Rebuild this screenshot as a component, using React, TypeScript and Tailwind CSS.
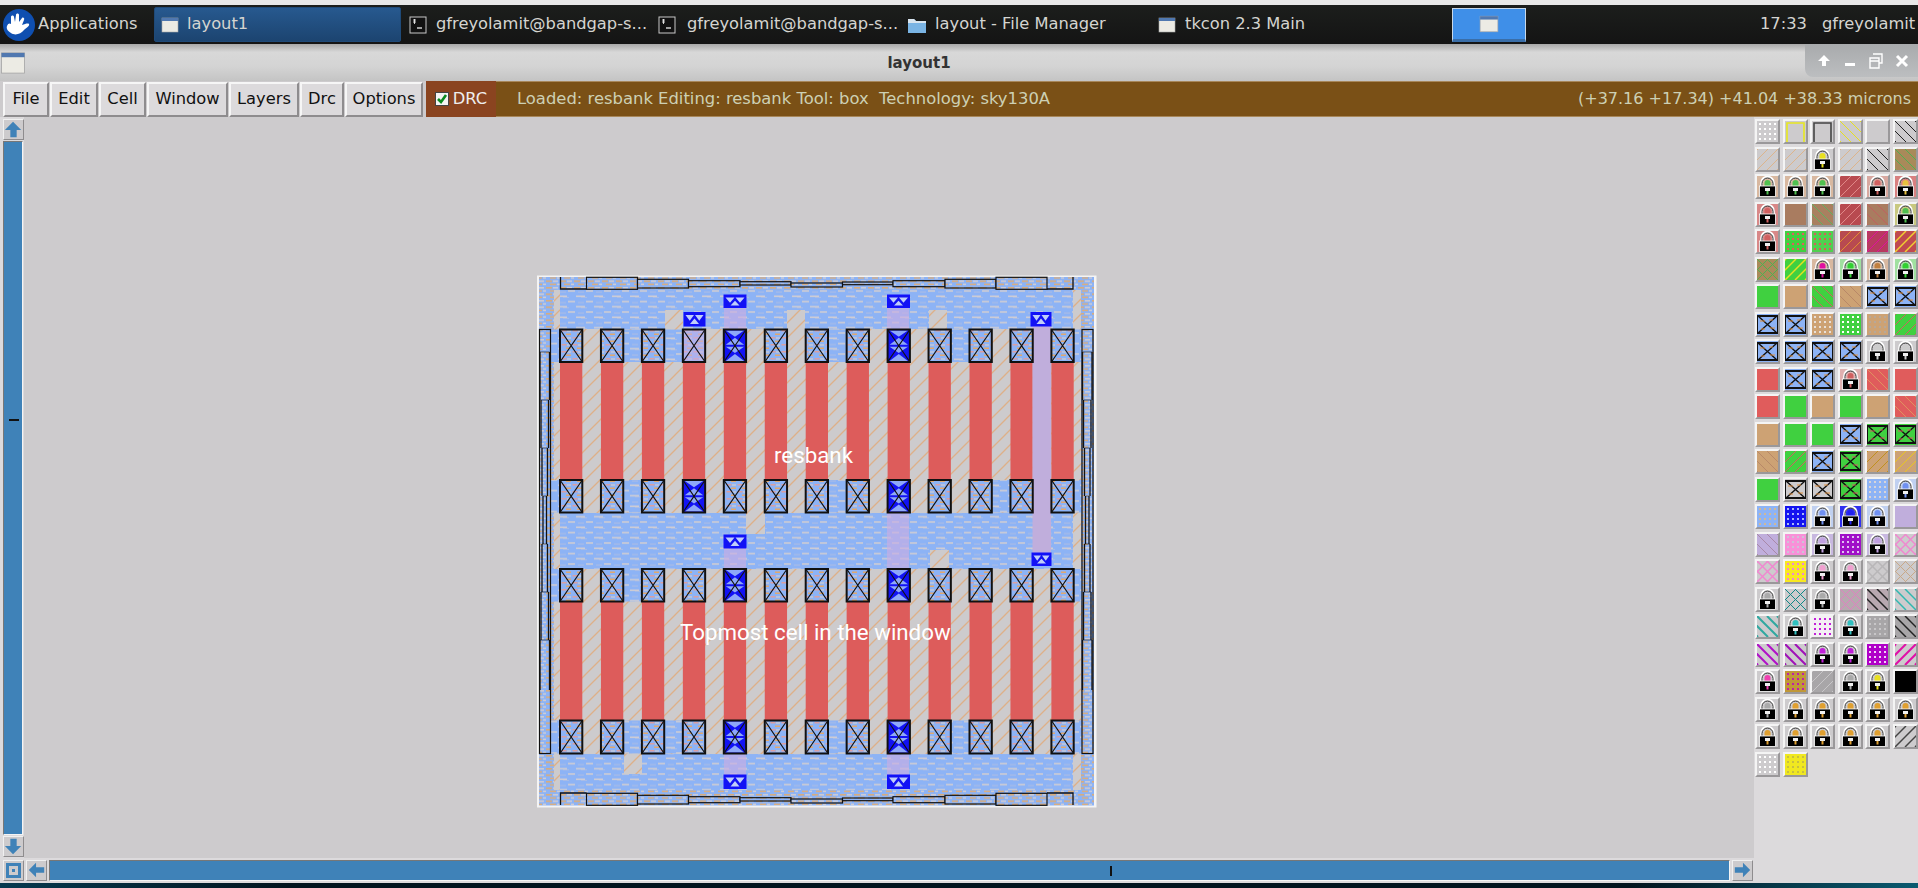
import { useId } from 'react';

type Swatch = {
  bg: string;
  line?: string;
  dir?: 'f' | 'b' | 'x';
  w?: number;
  dots?: string;
  lock?: string;
  box?: string;
  outline?: string;
};

const GREEN = '#40d040';
const TAN = '#cda274';
const RED = '#e05c5c';
const GREY = '#cdcbcd';
const METAL = '#8db3f5';

const plain = (bg: string): Swatch => ({ bg });
const hatch = (bg: string, line: string, dir: 'f' | 'b' | 'x' = 'f', w = 1): Swatch => ({ bg, line, dir, w });
const lock = (color: string, bg = GREY): Swatch => ({ bg, lock: color });
const cross = (box: string, bg = METAL): Swatch => ({ bg, box });
const dots = (bg: string, dotColor: string): Swatch => ({ bg, dots: dotColor });

const swatches: Swatch[] = [
  dots(GREY, '#ffffff'), { bg: GREY, outline: '#e8e820' }, { bg: GREY, outline: '#444444' }, hatch(GREY, '#e8e020', 'b'), plain(GREY), hatch(GREY, '#222222', 'b'),
  hatch(GREY, '#dcb48c'), hatch(GREY, '#dcb48c'), lock('#e8e020'), hatch(GREY, '#dcb48c'), hatch(GREY, '#222222', 'b'), hatch('#a98a5a', '#50b050', 'b'),
  lock('#50c050', '#d8b8a0'), lock('#50c050', '#d8b8a0'), lock('#50c050', '#d8b8a0'), hatch('#b84a50', '#e08888'), lock('#d06060', '#d8a8a0'), lock('#e8c040', '#d88080'),
  lock('#d06060', '#d88888'), plain('#a97c60'), hatch('#a98060', '#60b060', 'b'), hatch('#b84a50', '#e08888'), hatch('#a97c60', '#c06060', 'b'), lock('#50c050', '#c8c880'),
  lock('#d06060', '#d88888'), dots(GREEN, '#e05c5c'), dots('#50d050', '#d85c5c'), hatch('#b84a50', '#e09030'), hatch('#b83a60', '#e010a0'), hatch('#c04a50', '#f0d030', 'f', 1.5),
  hatch('#a98a5a', '#50b050', 'x'), hatch(GREEN, '#e8e020', 'f', 1.5), lock('#e010a0', '#d8b8a0'), lock('#30d030', '#a0e0a0'), lock('#c08040', '#d8b8a0'), lock('#30d030', '#a0e0a0'),
  plain(GREEN), plain(TAN), hatch(GREEN, '#d06060', 'b'), hatch(TAN, '#b88868', 'b'), cross('#111111'), cross('#111111'),
  cross('#111111'), cross('#111111'), dots(TAN, '#e8e0d8'), dots(GREEN, '#ffffff'), dots(TAN, '#b8a898'), hatch(GREEN, '#d06060'),
  cross('#111111'), cross('#111111'), cross('#111111'), cross('#111111'), lock('#cccccc'), lock('#cccccc'),
  plain(RED), cross('#111111'), cross('#111111'), lock('#d06060', '#e0b0b0'), hatch(RED, '#e09060', 'b'), plain(RED),
  plain(RED), plain(GREEN), plain(TAN), plain(GREEN), plain(TAN), hatch(RED, '#e09060', 'b'),
  plain(TAN), plain(GREEN), plain(GREEN), cross('#111111'), cross('#111111', GREEN), cross('#111111', GREEN),
  hatch(TAN, '#b88868', 'b'), hatch(GREEN, '#d06060'), cross('#111111'), cross('#111111', GREEN), hatch(TAN, '#c09020'), hatch(TAN, '#e8c820'),
  plain(GREEN), cross('#111111', GREY), cross('#111111', GREY), cross('#111111', GREEN), { bg: METAL, dots: '#d8d4d8' }, lock('#7090f0', '#c0d0f0'),
  { bg: METAL, dots: '#d0b898' }, { bg: '#1414f0', dots: '#a8b8f8' }, lock('#7090f0', '#c0d0f0'), lock('#2020f0', '#3030f0'), lock('#7090f0', '#c0d0f0'), plain('#c0aedc'),
  hatch('#c0aedc', '#a888a8', 'b'), dots('#f890d8', '#d0c0d8'), lock('#c0a0e0', '#c8b8e0'), { bg: '#a010c8', dots: '#e0c0f0' }, lock('#c0a0e0', '#c8b8e0'), hatch(GREY, '#f088d0', 'x', 1.5),
  hatch(GREY, '#f088d0', 'x', 1.5), { bg: '#f8e820', dots: '#f088d0' }, lock('#f0a0d0'), lock('#f0a0d0'), hatch(GREY, '#b8b6b8', 'x', 1.5), hatch(GREY, '#c8a888', 'x', 1),
  lock('#aaaaaa'), hatch(GREY, '#108888', 'x', 1), lock('#aaaaaa'), hatch('#b8a8b0', '#e080c0', 'x', 1), hatch('#b8a8b0', '#222222', 'b', 1.5), hatch(GREY, '#30b8b0', 'b', 1.5),
  hatch(GREY, '#30a8a0', 'b', 2), lock('#30c0c0'), { bg: '#f4f0f4', dots: '#c020d8' }, lock('#30c0c0'), dots('#a8a6a8', '#c8c6c8'), hatch('#a8a6a8', '#222222', 'b', 1.5),
  hatch(GREY, '#b010c8', 'b', 2), hatch(GREY, '#a010b8', 'b', 2), lock('#c020d8'), lock('#c020d8'), { bg: '#b000c8', dots: '#f0d0f4' }, hatch(GREY, '#e010a8', 'f', 2),
  lock('#f040b0'), { bg: '#c09838', dots: '#c020a8' }, hatch('#a8a6a8', '#c8c6c8', 'f', 1), lock('#aaaaaa'), lock('#e8e020'), plain('#000000'),
  lock('#aaaaaa'), lock('#e0a030'), lock('#e0a030'), lock('#e0a030'), lock('#e0a030'), lock('#e0a030'),
  lock('#e0a030'), lock('#e0a030'), lock('#e0a030'), lock('#e0a030'), lock('#e0a030'), hatch(GREY, '#444444', 'f', 1.5),
  dots(GREY, '#ffffff'), dots('#f0e820', '#c8c040'),
];

function HatchLines({ line, dir, w }: { line: string; dir: 'f' | 'b' | 'x'; w: number }) {
  const offsets = [-20, -10, 0, 10, 20];
  return (
    <g stroke={line} strokeWidth={w}>
      {dir !== 'b' && offsets.map((o) => <line key={`f${o}`} x1={o} y1={21} x2={o + 21} y2={0} />)}
      {dir !== 'f' && offsets.map((o) => <line key={`b${o}`} x1={o} y1={0} x2={o + 21} y2={21} />)}
    </g>
  );
}

function LayerSwatch({ s }: { s: Swatch }) {
  const dotCells = [3, 8, 13, 18];
  return (
    <div className="h-[25px] w-[25px] border-2 border-t-[#f4f4f4] border-l-[#f4f4f4] border-b-[#9a989a] border-r-[#9a989a]">
      <svg viewBox="0 0 21 21" className="block h-full w-full">
        <rect width="21" height="21" fill={s.bg} />
        {s.line && <HatchLines line={s.line} dir={s.dir ?? 'f'} w={s.w ?? 1} />}
        {s.dots && dotCells.flatMap((y) => dotCells.map((x) => <rect key={`${x}-${y}`} x={x - 1} y={y - 1} width="2" height="2" fill={s.dots} />))}
        {s.outline && <path d="M2 21V2h17v19" fill="none" stroke={s.outline} strokeWidth="1.6" />}
        {s.box && (
          <g>
            <rect x="0" y="2" width="21" height="17" fill="none" stroke={s.box} strokeWidth="2" />
            <path d="M1 2L20 19M20 2L1 19" stroke={s.box} strokeWidth="1.4" />
            <path d="M3 7h5M13 14h5M12 6h4M4 15h4" stroke={s.bg === GREEN ? '#d06060' : '#e09040'} strokeWidth="1" />
          </g>
        )}
        {s.lock && (
          <g>
            <path d="M4.5 12V7a6 6 0 0 1 12 0v5" fill={s.bg} stroke="#ffffff" strokeWidth="2.6" />
            <path d="M5 11V7.5a5.5 5.5 0 0 1 11 0V11" fill="none" stroke="#111111" strokeWidth="0.9" />
            <path d="M7.5 7a3 3 0 0 1 6 0v3h-6z" fill={s.lock} />
            <rect x="2.5" y="10" width="16" height="10.5" fill="#000000" stroke="#ffffff" strokeWidth="0.8" />
            <rect x="8" y="12" width="5" height="3" fill="#f0f0f0" />
            <rect x="9.5" y="15" width="2" height="3.5" fill={s.lock} />
          </g>
        )}
      </svg>
    </div>
  );
}

function WindowIcon({ className }: { className: string }) {
  return (
    <svg viewBox="0 0 18 18" className={className}>
      <rect x="1" y="2" width="16" height="14" fill="#ecebe4" stroke="#a8a8a8" strokeWidth="0.6" />
      <rect x="1" y="2" width="16" height="3" fill="#5078b0" />
    </svg>
  );
}

function TerminalIcon() {
  return (
    <svg viewBox="0 0 18 18" className="h-[18px] w-[18px] shrink-0">
      <rect x="1" y="1" width="16" height="16" fill="#111111" stroke="#c8c8c8" strokeWidth="1" />
      <path d="M4 4h3M4 6h3M5.5 3v5" stroke="#ffffff" strokeWidth="0.8" />
      <path d="M8 12h5" stroke="#ffffff" strokeWidth="1.2" />
    </svg>
  );
}

function XfceLogo() {
  return (
    <svg viewBox="0 0 32 32" className="h-[32px] w-[32px] shrink-0">
      <circle cx="16" cy="16" r="16" fill="#0f4fb0" />
      <path d="M4 17c1-3 3-3 4-2l0-7c0-2 3-2 3 0l1 5 1-7c0-2 3-2 3 0l0 7 3-4c1-1 3 0 2 2l-2 5c3-1 6-2 7-1 1 2-3 4-5 6-3 4-9 6-13 3-3-2-5-4-4-7z" fill="#ffffff" />
    </svg>
  );
}

function ArrowButton({ dir, className }: { dir: 'up' | 'down' | 'left' | 'right'; className?: string }) {
  const paths = {
    up: 'M10 2L19 11H14V19H7V11H1Z',
    down: 'M10 19L19 10H14V2H7V10H1Z',
    left: 'M2 10L10 2V7H19V13H10V18Z',
    right: 'M19 10L11 2V7H2V13H11V18Z',
  };
  return (
    <div className={`h-[21px] w-[21px] shrink-0 border border-t-[#f0f0f0] border-l-[#f0f0f0] border-b-[#8e8c8e] border-r-[#8e8c8e] bg-[#cdcbcd] ${className ?? ''}`}>
      <svg viewBox="0 0 21 21" className="block h-full w-full">
        <path d={paths[dir]} fill="#3f82b8" />
      </svg>
    </div>
  );
}

function TaskButton({ icon, label, className }: { icon: React.ReactNode; label: string; className: string }) {
  return (
    <div className={`flex h-[35px] shrink-0 items-center overflow-hidden whitespace-nowrap ${className}`}>
      {icon}
      <span>{label}</span>
    </div>
  );
}

function Taskbar() {
  return (
    <div className="flex h-[39px] items-center bg-[linear-gradient(#1c1e1c,#141414)] text-[16.3px] text-[#d4d4d0]">
      <div className="ml-[3px] mr-[17px] flex w-[134px] shrink-0 items-center gap-[3px]">
        <XfceLogo />
        <span>Applications</span>
      </div>
      <TaskButton
        icon={<WindowIcon className="h-[18px] w-[18px] shrink-0" />}
        label="layout1"
        className="w-[247px] gap-[8px] rounded-[2px] border border-[#1f4a78] bg-[linear-gradient(#27598f,#1c4470)] pl-[6px]"
      />
      <TaskButton icon={<TerminalIcon />} label="gfreyolamit@bandgap-s..." className="ml-[8px] w-[249px] gap-[9px]" />
      <TaskButton icon={<TerminalIcon />} label="gfreyolamit@bandgap-s..." className="w-[249px] gap-[11px]" />
      <TaskButton
        icon={
          <svg viewBox="0 0 20 18" className="h-[18px] w-[20px] shrink-0">
            <path d="M1 3h6l2 2h10v12H1z" fill="#7ab4e4" />
            <path d="M1 3h6l2 2h10v2H1z" fill="#d8e4ee" />
          </svg>
        }
        label="layout - File Manager"
        className="w-[251px] gap-[8px]"
      />
      <TaskButton icon={<WindowIcon className="h-[18px] w-[18px] shrink-0" />} label="tkcon 2.3 Main" className="w-[294px] gap-[9px]" />
      <div className="flex h-[34px] w-[74px] shrink-0 items-center justify-center border border-[#c8d8e8] border-b-[3px] border-b-[#3a6ea8] bg-[#3f8fe8]">
        <WindowIcon className="h-[20px] w-[20px]" />
      </div>
      <div className="ml-[234px] whitespace-nowrap">17:33</div>
      <div className="ml-[15px] whitespace-nowrap">gfreyolamit</div>
    </div>
  );
}

function TitleBar() {
  return (
    <div className="relative flex h-[37px] items-center justify-center bg-[linear-gradient(#a8a8a8,#d8d8d8_22%,#d4d4d4_60%,#c4c4c4)] pr-[80px] pt-[1px] text-[15px] font-bold text-[#333333]">
      <WindowIcon className="absolute left-[0px] top-[6px] h-[26px] w-[26px]" />
      <span>layout1</span>
      <div className="absolute right-0 top-0 flex h-[33px] w-[113px] items-center gap-[12px] rounded-bl-[8px] bg-[linear-gradient(#a8aaac,#bcbec0)] pl-[12px]">
        <svg viewBox="0 0 14 14" className="h-[14px] w-[14px]"><path d="M7 1l6 6H9v5H5V7H1z" fill="#ffffff" /></svg>
        <svg viewBox="0 0 14 14" className="h-[14px] w-[14px]"><rect x="2" y="9" width="10" height="3" fill="#ffffff" /></svg>
        <svg viewBox="0 0 14 16" className="h-[16px] w-[14px]"><path d="M4 1h9v9h-3M1 5h9v10H1zM1 8h9" fill="none" stroke="#ffffff" strokeWidth="1.4" /></svg>
        <svg viewBox="0 0 14 14" className="h-[14px] w-[14px]"><path d="M2 2l10 10M12 2L2 12" stroke="#ffffff" strokeWidth="3" /></svg>
      </div>
    </div>
  );
}

const menus = [
  { label: 'File', w: 'w-[46px]' },
  { label: 'Edit', w: 'w-[48px]' },
  { label: 'Cell', w: 'w-[47px]' },
  { label: 'Window', w: 'w-[81px]' },
  { label: 'Layers', w: 'w-[70px]' },
  { label: 'Drc', w: 'w-[44px]' },
  { label: 'Options', w: 'w-[78px]' },
];

function Toolbar() {
  return (
    <div className="flex h-[36px] bg-[#7a5016] text-[16.3px]">
      <div className="flex w-[426px] shrink-0 items-stretch gap-[1px] bg-[#cdcbcd] pl-[3px] pt-[1px]">
        {menus.map((m) => (
          <div key={m.label} className={`flex ${m.w} items-center justify-center border-2 border-t-[#f6f6f6] border-l-[#f6f6f6] border-b-[#8e8c8e] border-r-[#8e8c8e] bg-[#dcdadc] text-[#111111]`}>
            {m.label}
          </div>
        ))}
      </div>
      <div className="flex w-[70px] shrink-0 items-center justify-center gap-[4px] bg-[#8a4420] text-[#eeeeee]">
        <span className="flex h-[14px] w-[14px] items-center justify-center border border-[#444444] bg-[#f4f4f4]">
          <svg viewBox="0 0 12 12" className="h-[12px] w-[12px]"><path d="M2 6l3 3 5-7" fill="none" stroke="#0a8a20" strokeWidth="2.6" /></svg>
        </span>
        DRC
      </div>
      <div className="flex flex-1 items-center justify-between whitespace-pre border-y border-y-[#a8875a] pl-[21px] pr-[7px] text-[#cdd0b4]">
        <span className="text-[16.4px]">Loaded: resbank Editing: resbank Tool: box  Technology: sky130A</span>
        <span className="text-[16px]">(+37.16 +17.34) +41.04 +38.33 microns</span>
      </div>
    </div>
  );
}

// layout geometry, in screenshot pixels
const COLS = Array.from({ length: 13 }, (_, i) => 560 + i * 40.95);
const COL_W = 22.3;
const CONTACT_ROWS = [
  { y: 329.5, h: 32.5, dark: [4, 8], open: [1, 2, 6, 9] },
  { y: 480, h: 32.5, dark: [3, 8], open: [1, 6, 10] },
  { y: 569, h: 32.5, dark: [4, 8], open: [1] },
  { y: 720.5, h: 33, dark: [4, 8], open: [1, 2, 6, 9] },
];
const RED_ROWS = [
  { y: 362, h: 118 },
  { y: 602, h: 118.5 },
];
const NOTCHES = [
  [665, 310, 18, 19], [787, 310, 18, 19], [929, 310, 18, 19],
  [746, 512, 19, 22], [930, 550, 19, 18],
  [624, 753, 18, 21],
];
const PURPLE = [
  [724, 307, 22, 22], [887, 307, 22, 22],
  [724, 548, 22, 21], [887, 513, 22, 56],
  [724, 754, 22, 21], [887, 754, 22, 21],
];
const VIAS = [
  [724, 295, 22, 12.5], [684, 312.5, 21, 13.5], [887.5, 295, 22, 12.5], [1031, 312.5, 20, 13.5],
  [724, 535, 22, 13], [1032, 553, 19, 12.5],
  [724, 775, 22, 13.5], [887.5, 775, 22, 13.5],
];
const STEPS = [
  [586.5, 637.5, 0.3, 12.3], [637.5, 688.5, 2.3, 11], [688.5, 740, 3.7, 9.7], [740, 791, 4.7, 8],
  [791, 842.5, 6, 10], [842.5, 893, 5, 7.7], [893, 945, 3.7, 9.7], [945, 996, 2.3, 11], [996, 1047, 0.3, 12.3],
];
const SIDE_STEPS = [[352, 400], [400, 448], [448, 496], [496, 544], [544, 592], [592, 640], [640, 690]];

// two rows of triangles, down then up, like the contact cut stipple
function ViaCut({ x, y, w, h }: { x: number; y: number; w: number; h: number }) {
  const m = x + w / 2;
  return (
    <g>
      <rect x={x} y={y} width={w} height={h} fill="#1212f4" stroke="#1010ff" strokeWidth="1" />
      <path
        d={`M${x + 1.5} ${y + 2.5}H${m - 0.5}L${x + w / 4 + 0.5} ${y + h * 0.62}ZM${m + 0.5} ${y + 2.5}H${x + w - 1.5}L${x + (3 * w) / 4 - 0.5} ${y + h * 0.62}Z`}
        fill="#c0cefa"
      />
      <path d={`M${m} ${y + h * 0.45}L${m + 4.5} ${y + h - 2}H${m - 4.5}Z`} fill="#c0cefa" />
    </g>
  );
}

function DeepContact({ x, y, w, h }: { x: number; y: number; w: number; h: number }) {
  const rows = [0, 1, 2, 3];
  const rh = h / 4;
  return (
    <g>
      <rect x={x} y={y} width={w} height={h} fill="#1212f4" />
      {rows.map((r) => {
        const top = y + r * rh;
        const bot = top + rh - 1;
        const a = r % 2 === 0 ? `M${x + 2} ${top + 1}H${x + w - 2}L${x + w / 2} ${bot}Z` : `M${x + w / 2} ${top}L${x + w - 2} ${bot}H${x + 2}Z`;
        return <path key={r} d={a} fill="#8ea8f8" />;
      })}
    </g>
  );
}

function ResistorLayout() {
  const id = useId().replace(/:/g, '');
  const url = (name: string) => `url(#${id}${name})`;
  return (
    <svg viewBox="537 275 560 533" className="block h-[533px] w-[560px]">
      <defs>
        <pattern id={`${id}metal`} width="18" height="10.5" patternUnits="userSpaceOnUse">
          <rect width="18" height="10.5" fill={METAL} />
          <rect x="0" y="1.5" width="9" height="1.5" fill="#d2ced2" />
          <rect x="5" y="3" width="6" height="0.8" fill="#b4c0e0" />
          <rect x="10" y="6.8" width="7" height="1.5" fill="#d2ced2" />
          <rect x="2" y="8.2" width="6" height="0.8" fill="#b4c0e0" />
        </pattern>
        <pattern id={`${id}diff`} width="14" height="6.5" patternUnits="userSpaceOnUse">
          <rect width="14" height="6.5" fill={METAL} />
          <rect x="0" y="1" width="6" height="1.5" fill="#e0ac70" />
          <rect x="7" y="1" width="5" height="1.5" fill="#d2ced2" />
          <rect x="4" y="4.2" width="6" height="1.5" fill="#dcae7c" />
          <rect x="11" y="4.2" width="3" height="1.5" fill="#d2ced2" />
        </pattern>
        <pattern id={`${id}cont`} width="11" height="7" patternUnits="userSpaceOnUse">
          <rect width="11" height="7" fill={METAL} />
          <rect x="0.5" y="1" width="5" height="1.5" fill="#dca0a0" />
          <rect x="6" y="1.4" width="4" height="1.2" fill="#d2ced2" />
          <rect x="5" y="4.5" width="5" height="1.5" fill="#e0a870" />
        </pattern>
        <pattern id={`${id}hatch`} width="15" height="15" patternUnits="userSpaceOnUse">
          <rect width="15" height="15" fill={GREY} />
          <path d="M-1 16L16 -1M-1 1L1 -1M14 16L16 14" stroke="#deb088" strokeWidth="1.3" />
        </pattern>
      </defs>

      <rect x="537" y="275.5" width="559.5" height="532" fill="#f4f4f4" />
      <rect x="539" y="277" width="555" height="528.5" fill={url('diff')} />
      <rect x="554" y="290" width="527" height="500" fill={url('hatch')} />

      {/* metal bands */}
      {[[290, 39], [513, 56], [754, 36]].map(([y, h]) => (
        <rect key={y} x="560" y={y} width="513" height={h} fill={url('metal')} />
      ))}
      {NOTCHES.map(([x, y, w, h]) => (
        <rect key={`${x}-${y}`} x={x} y={y} width={w} height={h} fill={url('hatch')} />
      ))}

      {/* open gaps in the contact rows */}
      {CONTACT_ROWS.flatMap((r) =>
        r.open.map((g) => <rect key={`${r.y}-${g}`} x={COLS[g] + COL_W} y={r.y} width={40.95 - COL_W} height={r.h} fill={url('metal')} />),
      )}
      {CONTACT_ROWS.flatMap((r) => [
        <rect key={`l${r.y}`} x="551" y={r.y} width="9" height={r.h} fill={url('metal')} />,
        <rect key={`r${r.y}`} x="1073" y={r.y} width="9" height={r.h} fill={url('metal')} />,
      ])}

      {RED_ROWS.flatMap((r) =>
        COLS.map((x) => <rect key={`${r.y}-${x}`} x={x} y={r.y} width={COL_W} height={r.h} fill="#dd5c5b" />),
      )}

      {PURPLE.map(([x, y, w, h]) => (
        <rect key={`${x}-${y}`} x={x} y={y} width={w} height={h} fill="#c8aee4" fillOpacity="0.65" />
      ))}
      <rect x="1032.5" y="326" width="18.5" height="227" fill="#c0aedc" />

      {VIAS.map(([x, y, w, h]) => (
        <ViaCut key={`${x}-${y}`} x={x} y={y} w={w} h={h} />
      ))}

      {/* contacts */}
      {CONTACT_ROWS.flatMap((r) =>
        COLS.map((x, i) => {
          const dark = r.dark.includes(i);
          const tinted = r.y === 329.5 && i === 3;
          return (
            <g key={`${r.y}-${i}`}>
              {dark ? (
                <DeepContact x={x} y={r.y} w={COL_W} h={r.h} />
              ) : (
                <rect x={x} y={r.y} width={COL_W} height={r.h} fill={url('cont')} />
              )}
              {tinted && <rect x={x} y={r.y} width={COL_W} height={r.h} fill="#c8aee4" fillOpacity="0.55" />}
              <rect x={x} y={r.y} width={COL_W} height={r.h} fill="none" stroke="#111111" strokeWidth="2" />
              <path d={`M${x} ${r.y}L${x + COL_W} ${r.y + r.h}M${x + COL_W} ${r.y}L${x} ${r.y + r.h}`} stroke="#111111" strokeWidth="1.2" />
            </g>
          );
        }),
      )}

      {/* guard frame, top and bottom */}
      {[277, 793].map((top) => (
        <g key={top} fill="none" stroke="#111111">
          <path d={top === 277 ? 'M560.5 277V289H586.5M1047 289H1073V277' : 'M560.5 805V793H586.5M1047 793H1073V805'} strokeWidth="1.3" />
          {STEPS.map(([a, b, t, bt]) => (
            <rect key={a} x={a} y={top + t} width={b - a} height={bt - t} fill={url('diff')} strokeWidth="1.2" />
          ))}
        </g>
      ))}

      {/* guard frame, left and right */}
      {[539.5, 1082].map((x) => (
        <g key={x}>
          <rect x={x} y="329.5" width="11" height="424" fill={url('diff')} stroke="#111111" strokeWidth="1.2" />
          {SIDE_STEPS.map(([a, b], i) => {
            const inset = [0.5, 1.5, 2.5, 3.5, 2.5, 1.5, 0.5][i];
            return (
              <g key={a} stroke="#111111" strokeWidth="1.3">
                <line x1={x + inset} y1={a} x2={x + inset} y2={b} />
                <line x1={x + 10.5 - inset} y1={a} x2={x + 10.5 - inset} y2={b} />
                <line x1={x + inset} y1={a} x2={x + 10.5 - inset} y2={a} strokeWidth="0.6" />
              </g>
            );
          })}
        </g>
      ))}
    </svg>
  );
}

function Canvas() {
  return (
    <div className="relative min-w-0 flex-1 bg-[#cdcbcd] pl-[513px] pt-[158px] [font-family:Roboto,sans-serif]">
      <ResistorLayout />
      <span className="absolute left-[750px] top-[322px] text-[22.3px] text-white">resbank</span>
      <span className="absolute left-[656px] top-[499px] whitespace-nowrap text-[22.3px] text-white">Topmost cell in the window</span>
    </div>
  );
}

function App() {
  return (
    <div className="flex h-[888px] w-[1918px] flex-col overflow-hidden bg-[#dcdadc] [font-family:'DejaVu_Sans',sans-serif]">
      <div className="h-[5px] shrink-0 bg-[#e8e8e8]" />
      <Taskbar />
      <TitleBar />
      <Toolbar />
      <div className="flex min-h-0 flex-1">
        <div className="flex w-[1754px] shrink-0 flex-col">
          <div className="flex min-h-0 flex-1">
            <div className="flex w-[24px] shrink-0 flex-col items-center bg-[#dcdadc] pl-[2px] pt-[2px]">
              <ArrowButton dir="up" />
              <div className="relative mx-[1px] my-[1px] flex-1 self-stretch border border-t-[#777777] border-r-[#f4f4f4] border-b-[#f4f4f4] border-l-[#777777] bg-[#3f82b8]">
                <div className="absolute left-[5px] top-[277px] h-[2px] w-[10px] bg-[#111111]" />
              </div>
              <ArrowButton dir="down" className="mb-[1px]" />
            </div>
            <Canvas />
          </div>
          <div className="flex h-[25px] shrink-0 items-center gap-[2px] pl-[3px] pr-[1px]">
            <div className="h-[21px] w-[21px] shrink-0 border border-t-[#f0f0f0] border-l-[#f0f0f0] border-b-[#8e8c8e] border-r-[#8e8c8e] bg-[#cdcbcd] p-[2px]">
              <div className="flex h-full w-full items-center justify-center border-[3px] border-[#3f82b8]">
                <div className="h-[3px] w-[3px] bg-[#3f82b8]" />
              </div>
            </div>
            <ArrowButton dir="left" />
            <div className="relative h-[21px] flex-1 border border-t-[#777777] border-r-[#f4f4f4] border-b-[#f4f4f4] border-l-[#777777] bg-[#3f82b8]">
              <div className="absolute left-[1060px] top-[5px] h-[10px] w-[2px] bg-[#111111]" />
            </div>
            <ArrowButton dir="right" />
          </div>
        </div>
        <div className="flex-1 pl-[1px] pt-[2px]">
          <div className="grid grid-cols-[repeat(6,25px)] gap-x-[2.6px] gap-y-[2.5px]">
            {swatches.map((s, i) => (
              <LayerSwatch key={i} s={s} />
            ))}
          </div>
        </div>
      </div>
      <div className="h-[5px] shrink-0 bg-[linear-gradient(90deg,#063a50,#02141e_15%,#02141e_85%,#0a5a70)]" />
    </div>
  );
}

export default App;
